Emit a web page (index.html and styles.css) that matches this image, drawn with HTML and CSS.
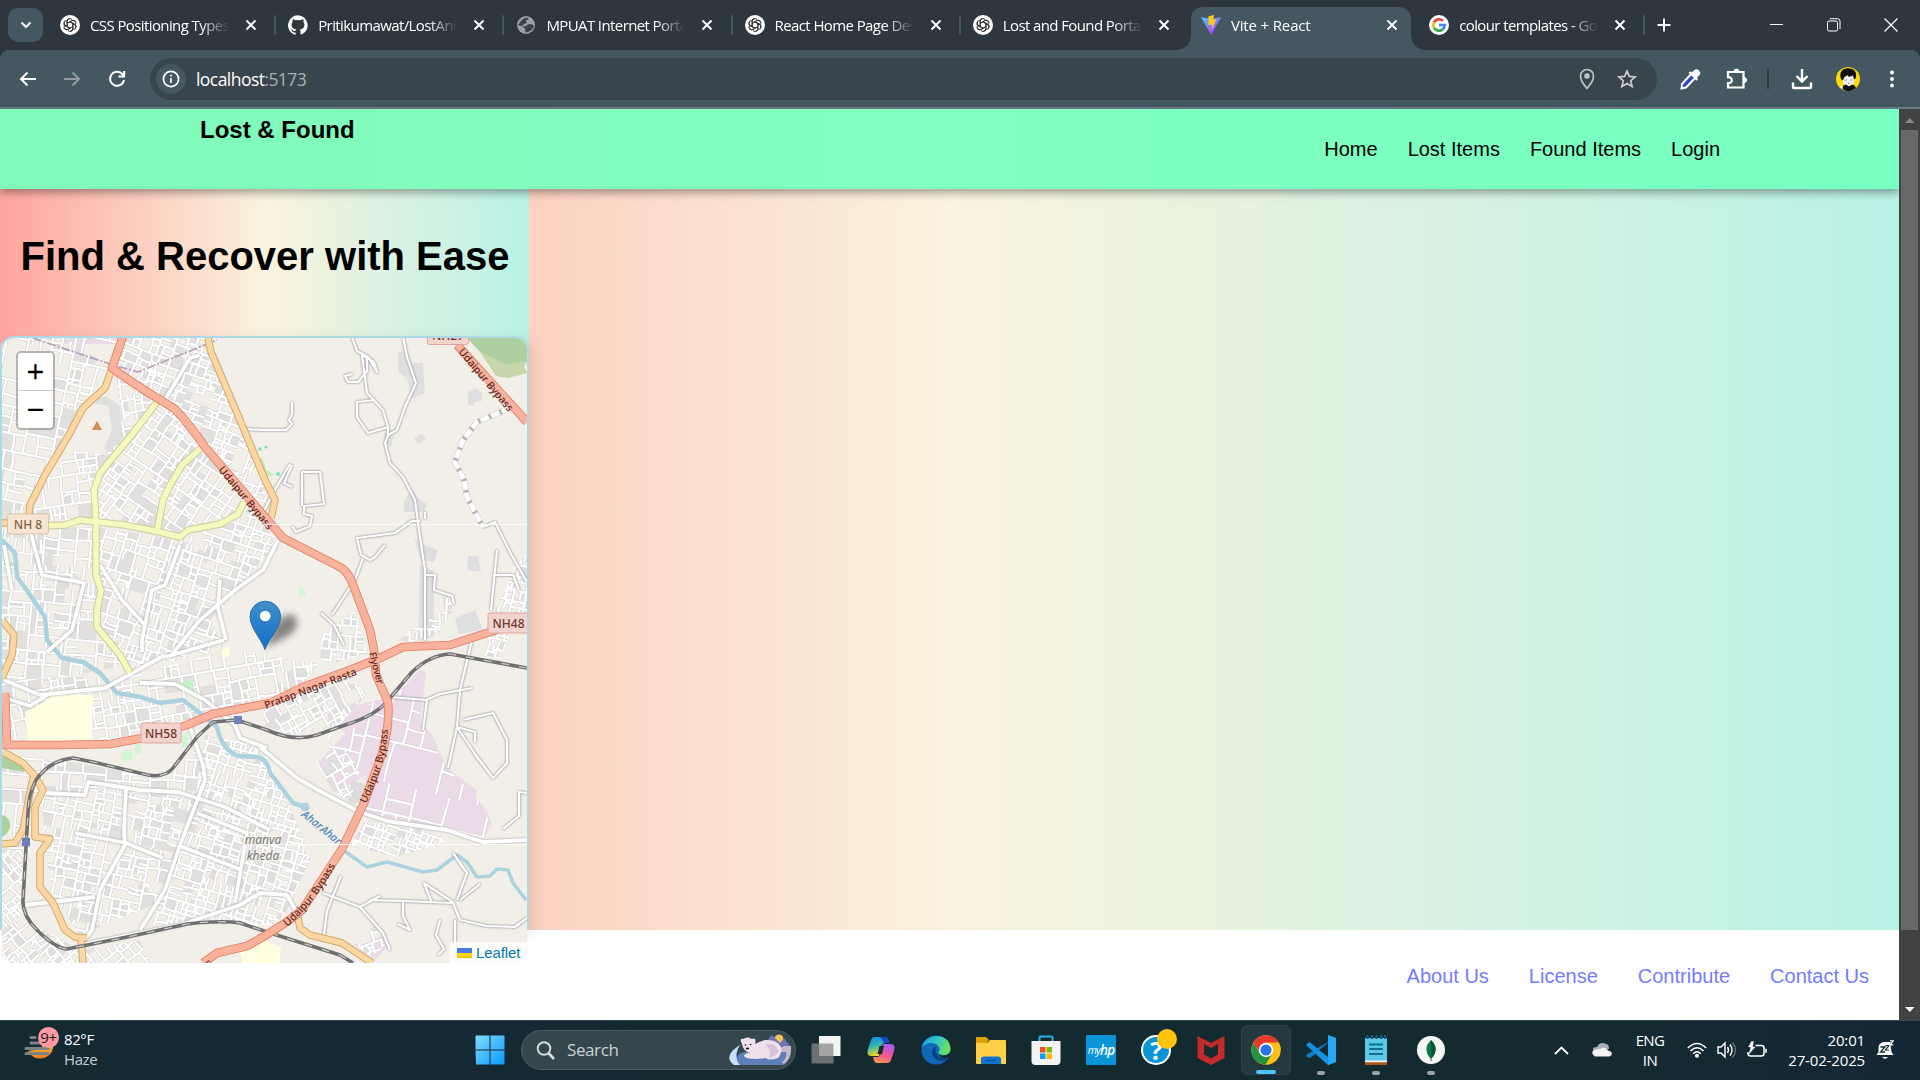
FILE: index.html
```html
<!DOCTYPE html>
<html lang="en">
<head>
<meta charset="utf-8">
<title>Vite + React</title>
<link rel="stylesheet" href="styles.css">
</head>
<body>
<svg class="defs" width="0" height="0" aria-hidden="true">
  <defs>
    <symbol id="close" viewBox="0 0 12 12"><path d="M1.5 1.5l9 9M10.5 1.5l-9 9" stroke="#fff" stroke-width="1.9"/></symbol>
    <symbol id="gpt" viewBox="0 0 20 20"><circle cx="10" cy="10" r="10" fill="#fff"/><g fill="none" stroke="#333" stroke-width="1"><path id="petal" d="M7.2 11.6V6.2a2.7 2.7 0 0 1 5-1.4M7.2 8.3l4.4-2.6a2.7 2.7 0 0 1 3.7 1"/><use href="#petal" transform="rotate(60 10 10)"/><use href="#petal" transform="rotate(120 10 10)"/><use href="#petal" transform="rotate(180 10 10)"/><use href="#petal" transform="rotate(240 10 10)"/><use href="#petal" transform="rotate(300 10 10)"/></g></symbol>
  </defs>
</svg>
<div class="browser">
  <div class="tabstrip">
    <button class="tabsearch"><svg width="12" height="8" viewBox="0 0 12 8"><path d="M1.5 1.5L6 6l4.500-4.500" fill="none" stroke="#fff" stroke-width="2"/></svg></button>
    <div class="tab"><svg class="fav"><use href="#gpt"/></svg><span class="title">CSS Positioning Types</span><svg class="x"><use href="#close"/></svg><i class="div"></i></div>
    <div class="tab"><svg class="fav" viewBox="0 0 16 16"><path fill="#fff" d="M8 .2a8 8 0 0 0-2.500 15.600c.4.070.55-.17.55-.38v-1.490c-2.230.48-2.700-1.070-2.700-1.070-.36-.93-.89-1.180-.89-1.180-.73-.5.05-.49.05-.49.8.060 1.230.83 1.230.83.72 1.220 1.870.87 2.330.66.070-.52.280-.87.500-1.070-1.770-.2-3.640-.89-3.640-3.950 0-.87.310-1.590.820-2.150-.08-.2-.36-1.020.080-2.120 0 0 .67-.21 2.200.82a7.600 7.600 0 0 1 4 0c1.530-1.040 2.200-.82 2.200-.82.440 1.100.160 1.920.080 2.120.510.560.820 1.270.820 2.150 0 3.070-1.870 3.750-3.650 3.950.290.250.540.730.540 1.480v2.200c0 .21.150.46.550.38A8 8 0 0 0 8 .2z"/></svg><span class="title">Pritikumawat/LostAndFound</span><svg class="x"><use href="#close"/></svg><i class="div"></i></div>
    <div class="tab"><svg class="fav" viewBox="0 0 20 20"><circle cx="10" cy="10" r="9" fill="#9aa0a6"/><path d="M5 6q2-3 6-3.500l2 1.500-3 1.500q-1 1 1 1.500-1 2-3 2l-2 2-4-1zM9.500 17.500l-.5-4-3-2 4-.5q3-3 6-1.500l2 1q-1 6-8.500 7z" fill="#39444a"/></svg><span class="title">MPUAT Internet Portal</span><svg class="x"><use href="#close"/></svg><i class="div"></i></div>
    <div class="tab"><svg class="fav"><use href="#gpt"/></svg><span class="title">React Home Page Design</span><svg class="x"><use href="#close"/></svg><i class="div"></i></div>
    <div class="tab"><svg class="fav"><use href="#gpt"/></svg><span class="title">Lost and Found Portal</span><svg class="x"><use href="#close"/></svg></div>
    <div class="tab active"><svg class="fav" viewBox="0 0 20 20"><defs><linearGradient id="vt" x1="0" y1="0" x2=".6" y2="1"><stop offset="0" stop-color="#41d1ff"/><stop offset="1" stop-color="#bd34fe"/></linearGradient></defs><path d="M0 2.300l10 1.500 10-1.500L10.300 20z" fill="url(#vt)"/><path d="M7.500 1.300l6-1.200-1.500 4.500 3.400-.4-5 11 .7-5.700-3.700.5z" fill="#ffc81f"/></svg><span class="title">Vite + React</span><svg class="x"><use href="#close"/></svg></div>
    <div class="tab"><svg class="fav" viewBox="0 0 20 20"><circle cx="10" cy="10" r="10" fill="#fff"/><g fill="none" stroke-width="2.700"><path d="M4.900 7.400A5.700 5.700 0 0 1 14 5.900" stroke="#ea4335"/><path d="M4.900 12.600a5.700 5.700 0 0 1 0-5.200" stroke="#fbbc05"/><path d="M13.800 14.200a5.700 5.700 0 0 1-8.900-1.600" stroke="#34a853"/><path d="M10 10h5.700a5.700 5.700 0 0 1-1.900 4.200" stroke="#4285f4"/></g></svg><span class="title">colour templates - Google</span><svg class="x"><use href="#close"/></svg><i class="div"></i></div>
    <svg class="newtab" width="14" height="14" viewBox="0 0 14 14"><path d="M7 .5v13M.5 7h13" stroke="#fff" stroke-width="2"/></svg>
    <div class="winctl">
      <svg width="14" height="14"><path d="M0 6.500h13" stroke="#fff"/></svg>
      <svg width="14" height="14" fill="none" stroke="#fff"><rect x=".5" y="3" width="10" height="10" rx="1.500"/><path d="M3 .7h7.500a2.500 2.500 0 0 1 2.500 2.500V11"/></svg>
      <svg width="14" height="14"><path d="M.5.5l13 13M13.500.5l-13 13" stroke="#fff" stroke-width="1.200"/></svg>
    </div>
  </div>
  <div class="toolbar">
    <svg class="ic" viewBox="0 0 24 24" fill="none" stroke="#fff" stroke-width="2"><path d="M20 12H5.500M11.500 5.500L5 12l6.500 6.500"/></svg>
    <svg class="ic fwd" viewBox="0 0 24 24" fill="none" stroke="#919a9f" stroke-width="2"><path d="M4 12h14.500M12.500 5.500L19 12l-6.500 6.500"/></svg>
    <svg class="ic reload" viewBox="0 0 24 24" fill="none" stroke="#fff" stroke-width="2"><path d="M19 13a7 7 0 1 1-2-6.200l2 2M19.200 4v5.500h-5.700"/></svg>
    <div class="omnibox">
      <span class="info"><svg width="18" height="18" viewBox="0 0 18 18"><circle cx="9" cy="9" r="7.600" fill="none" stroke="#fff" stroke-width="1.700"/><path d="M9 8v5M9 4.800v1.800" stroke="#fff" stroke-width="1.700"/></svg></span>
      <span class="url">localhost<em>:5173</em></span>
      <svg class="pin" width="20" height="22" viewBox="0 0 20 22" fill="none" stroke="#c0c5c8" stroke-width="1.700"><path d="M10 20.300C5 15 3.500 11 3.500 8a6.500 6.500 0 0 1 13 0c0 3-1.500 7-6.500 12.300z"/><circle cx="10" cy="8" r="1.900" fill="#c0c5c8"/></svg>
      <svg class="star" width="20" height="20" viewBox="0 0 20 20"><path d="M10 2l2.300 5.400 5.800.5-4.400 3.800 1.400 5.700-5.100-3-5.100 3 1.400-5.700L1.900 7.900l5.800-.5z" fill="none" stroke="#c9cdd0" stroke-width="1.700"/></svg>
    </div>
    <svg class="ic drop" viewBox="0 0 24 24"><path d="M3.500 21.500l.5-4.500L14 6l4 4L8 20.500z" fill="#2c47c4" stroke="#fff" stroke-width="2"/><path d="M10.500 5.500l2-1 1.500 1L17 2.500q2-1 4 1t1 4L19 10.500l1 1.500-1.500 1.800z" fill="#fff"/></svg>
    <svg class="ic puzzle" viewBox="0 0 24 24" fill="none" stroke="#fff" stroke-width="2.200"><path d="M3 5h15.500v15.500H3v-4.300c5 .5 5-6.500 0-6z"/><path d="M9 4.500a2.500 2.500 0 0 1 5 0zM19 10.500a2.500 2.500 0 0 1 0 5z" fill="#fff" stroke-width="1"/></svg>
    <i class="tsep"></i>
    <svg class="ic dl" viewBox="0 0 24 24" fill="none" stroke="#fff" stroke-width="2.400"><path d="M12 2v12M6.500 9l5.500 5.500L17.500 9M3 15.500V20q0 1 1 1h16q1 0 1-1v-4.500"/></svg>
    <svg class="ic ava" viewBox="0 0 24 24"><circle cx="12" cy="12" r="12" fill="#ffd800"/><path d="M6.500 9h12v5.500q-1 4.500-6 5-5-.5-6-5z" fill="#f2f2f2"/><path d="M5 12C2.500 5 7 .5 13 1.500c6-.5 8.500 5 6.500 10l-1.500 1-1-4-4 1.500L11.500 8 8 10.500l-1 3z" fill="#111"/><path d="M8.500 13H11M14 13h2.500M12 16.300h2" stroke="#777" stroke-width=".8"/><path d="M7.500 18.500l2.500-1 3 2 3-2 2.500 1 1.500 2.500q-7.500 6-14 .5z" fill="#111"/><path d="M5 18l2 3-1 1-2-2z" fill="#f2f2f2"/></svg>
    <svg class="ic menu" viewBox="0 0 24 24" fill="#fff"><circle cx="12" cy="5.500" r="1.900"/><circle cx="12" cy="12" r="1.900"/><circle cx="12" cy="18.500" r="1.900"/></svg>
  </div>

  <div class="viewport">
    <div class="page">
      <header class="navbar">
        <div class="brand">Lost &amp; Found</div>
        <nav><a>Home</a><a>Lost Items</a><a>Found Items</a><a>Login</a></nav>
      </header>
      <main class="hero">
        <section class="panel">
          <h1>Find &amp; Recover with Ease</h1>
          <div class="mapframe">
            <div class="map">
              <svg class="tiles" width="525" height="625" viewBox="2 338 525 625">
                <defs>
                  <path id="t1" d="M218 470L280 545"/><path id="t2" d="M458 352L520 426"/><path id="t3" d="M366 804C380 775 388 752 388 720"/><path id="t4" d="M287 927C310 907 324 888 341 855"/><path id="t5" d="M266 709L362 673"/><path id="t6" d="M369 653L381 700"/><path id="t7" d="M301 816Q322 832 350 856"/>
                  <linearGradient id="mk" x1="0" y1="0" x2="0" y2="1"><stop offset="0" stop-color="#3f8fca"/><stop offset="1" stop-color="#126fc6"/></linearGradient>
                  <filter id="soft" x="-50%" y="-50%" width="200%" height="200%"><feGaussianBlur stdDeviation="3.500"/></filter>
                </defs>
                <rect x="2" y="338" width="525" height="625" fill="#f2efe9"/>
                <g fill="#dfdfdf">
                  <path d="M398 352l10-1 4 12 11 0 2 30-13 6-5-20-9-8zM468 392l8-4 6 5 0 8-6 0-3 5-5-2zM414 439l7-5 6 4-8 6zM384 432l10 4-3 12-7-8zM404 502l8-14 6 10 9 6-3 8-20 0zM414 538l8 6 16 6-4 12-13-2zM468 556l10 0 3 16-14-2zM420 565l14 6 0 65-16 6zM455 618l20-8 8 20-25 4zM80 408l12-8 14-4 14 10 4 30-14 22-6-10 8-18-4-24-20-4-10 12z"/>
                </g>
                <path d="M60 338h80v6H62z" fill="#ebdbe8"/>
                <path d="M467 338h60v24l-20 3-24-10z" fill="#add19e"/><path d="M480 352l27 13 20-4-3 6 4 6-20 5-12-2z" fill="#c8d7ab"/>
                <path d="M420 670L426 672 420 722 432 735 447 768 477 790 476 800 483 805 492 823 485 838 363 813 366 775 340 790 318 763 346 733 328 722 328 713 377 700 393 698zM357 947L383 935 387 947 372 963z" fill="#ebdbe8"/>
                <path d="M352 780l15 5-6 22-13-6z" fill="#dcdcdc"/>
                <g id="streets"></g>
                <g fill="#fffee0"><path d="M25 712L48 700 50 695H93L92 740 28 742z"/><path d="M240 952L262 937 281 948 279 963H243zM48 641h12l-3 8zM222 650l8-4-1 10-6 2z"/></g>
                <path d="M180 683l12-3 3 14z" fill="#c4f3c8"/><path d="M2 756l26 8-4 8-22-4zM2 815q9 2 8 12-1 6-8 10z" fill="#add19e"/><g fill="#d2f5d4"><circle cx="127" cy="756" r="6"/><path d="M182 735l6-2v14l-6 0zM135 745l5-2 1 10-6 1zM298 588l6-2 2 10-7 0z"/></g>
                <path d="M97 421l5 9H92z" fill="#d08f55"/>
                <path d="M262 456l4 14 8 4-6 3-10-14z" fill="#c8e8b8"/><g fill="#7fe0c0"><circle cx="260" cy="449" r="1.800"/><circle cx="266" cy="447" r="1.600"/><circle cx="278" cy="474" r="2"/></g>
                <g class="river"><path d="M2 540L15 553 17 577 28 592 45 617 47 640 62 658 83 662 100 673 117 693 140 697 160 703 183 700 200 713 217 727Q222 750 238 756L258 757Q268 760 270 773L293 803 305 807"/><path d="M343 850L367 867 387 862 423 872 437 870 457 855 467 862 477 877 490 876 497 869 508 870 513 883 526 900" stroke-width="3.500"/></g>
                <circle cx="305" cy="807" r="4.500" fill="#aad3df"/>
                <g class="lane">
                  <path d="M403 337L407 357 416 383 405 407 397 430 388 435 385 443 390 463 403 477 415 500 420 537 425 570V640M352 337L357 351 368 357 377 372 374 362 362 355 367 393 383 410 388 427 388 435M375 400L357 402 357 417 368 433 388 427M367 357v14l-9 11-10 0-3-6 8-2M420 521L412 521 395 533 357 538 361 555 370 560 375 557 385 545M425 519V512M363 558L355 580 332 615M292 402l0 12-3 6 3 4-6 6-24 0-18-1M302 472h18l4 32-20 2v8l8 2-2 10-14 6-4-6M302 472v34M292 465l-8 18 8 4M260 518l16-30 14-24M321 613l13 12 10 20M483 527l12-5 16 32 16 28M497 550l-6 60M425 575h10l-1 15 18 6 2 8M493 575h20l6 15"/>
                  <path d="M472 640L460 690 457 727 448 768M457 727L477 757 493 778 507 763 507 740 493 713 463 720M390 697l36 3 14-6 32-6M427 700l-4 30M457 727l18 5 0 10M527 793l-8-1 0 24-16 13M453 853L467 873 457 900M370 900L403 901 453 903 460 920 487 926 515 927 527 918M323 893L360 907 383 933 390 950M360 907l20-11M403 901v15l7 14-12-6M460 900l20-16M454 903l-30-20 8 20M440 920l-4 15 8 14-6 6M455 920v40M341 876l-14 35-3 24"/>
                </g>
                <g class="road">
                  <path d="M260 747L297 778 327 795 360 812 387 821 447 830 483 842 527 840M200 355L190 358 165 400M100 565L122 600 145 625M30 530L42 575 84 583 72 630 47 652M278 540L263 570 235 590 200 620 170 657M165 657L224 640M180 545L165 585 152 590 142 640 142 652M4 680L40 695 105 688 165 655M4 545L12 590M140 683L175 684 205 700 235 725 240 738 267 748M190 727L203 765 205 780 180 845 165 890 140 930M45 793L85 795 88 782 140 790 178 792 225 807 270 830M75 833L126 843 163 858M126 790L124 830 125 845 100 890 92 930 80 945 130 935 180 925 240 905 260 893 287 895 297 913M25 905L95 897M220 580L218 608 226 640M2 697L30 706 52 692M197 813l50 20-12 70M180 846l62 24"/>
                </g>
                <g class="boundary"><path d="M33 338L77 353 113 365 138 372 217 340"/></g>
                <g class="yellow-case"><path id="yl" d="M157 402L130 437 100 473 94 490 96 522 96 575 101 590 97 610 97 627 120 655 130 673M40 526L65 525 80 520 125 525 160 532 180 537 188 530 220 524 238 514 244 502M201 448L182 465 170 485 163 500 157 532"/></g>
                <use href="#yl" class="yellow"/>
                <g class="orange-case"><path id="or" d="M112 368L105 388 83 408 70 433 45 475 30 505 28 523M208 338L211 352 240 420 265 480 275 500 271 518M2 523H10M2 620L14 635 12 655 2 678M3 752L23 763 34 775 29 797 23 830 15 843 2 844M36 778L43 790 35 807 35 837 50 839 40 853 40 887 53 903 65 930 75 937 87 938M81 938L83 963M297 913L300 928 310 935 342 943 372 963"/></g>
                <use href="#or" class="orange"/>
                <g class="rail"><path id="rl" d="M527 668L450 654Q430 655 412 672L390 698Q378 715 345 725L317 735Q293 742 267 730L237 720 213 722 197 737 173 768Q165 778 148 775L93 762 73 758Q50 760 36 780 28 795 28 813L23 900Q22 915 37 930 55 948 67 949L127 937 187 924Q222 920 240 923L267 932 340 955 353 963"/></g>
                <use href="#rl" class="railgap"/>
                <g fill="#7180bd"><rect x="234" y="716" width="8" height="8"/><rect x="22" y="838" width="8" height="8"/></g>
                <path class="track-case" d="M510 408L477 422 463 440 455 462 464 480 467 497 483 527"/><path class="track" d="M510 408L477 422 463 440 455 462 464 480 467 497 483 527"/>
                <g class="trunk-case"><path id="tr" d="M123 336L112 368Q135 385 175 409 190 425 205 447L270 523 283 538 338 566Q347 570 352 582L370 630 374 650 376 675 388 702Q390 725 382 754L364 803 342 849 302 910Q285 925 247 946L217 953 203 963M457 345L527 422M2 745H60L110 744 143 738 187 725 213 714 270 703 303 687 350 670 380 658 403 647 450 645 490 632 527 620M5 693L7 743"/></g>
                <use href="#tr" class="trunk"/>
                <g class="shield">
                  <rect x="7.500" y="514" width="41" height="20" rx="2" fill="#f6e5d2" stroke="#dcc3a4"/><text x="28" y="529" fill="#7d6543">NH 8</text>
                  <rect x="141" y="723" width="40" height="20" rx="2" fill="#f3d3cd" stroke="#dfa79f"/><text x="161" y="738">NH58</text>
                  <rect x="488" y="613" width="44" height="20" rx="2" fill="#f3d3cd" stroke="#dfa79f"/><text x="508.500" y="628">NH48</text>
                  <rect x="427.500" y="324" width="41" height="20.500" rx="2" fill="#f3d3cd" stroke="#dfa79f"/><text x="448" y="340">NH27</text>
                </g>
                <g class="way"><text><textPath href="#t1">Udaipur Bypass</textPath></text><text><textPath href="#t2">Udaipur Bypass</textPath></text><text><textPath href="#t3">Udaipur Bypass</textPath></text><text><textPath href="#t4">Udaipur Bypass</textPath></text><text><textPath href="#t5">Pratap Nagar Rasta</textPath></text><text class="fly"><textPath href="#t6">Flyover</textPath></text><text class="water"><textPath href="#t7">AharAhar</textPath></text><text x="204" y="970" transform="rotate(-32 204 970)">ss</text></g>
                <g class="place"><text x="263" y="844">manva</text><text x="263" y="859.500">kheda</text></g>
                <path d="M260 524.500H527M260 844.500H527" stroke="#fff" opacity=".8"/>
                <path d="M265 648L276 622q14-12 20-4 4 10-8 18z" fill="#000" opacity=".45" filter="url(#soft)"/>
                <path d="M265 649.500C262 640 250 628 250 616.500a15.300 15.300 0 0 1 30.600 0C280.600 628 268 640 265 649.500z" fill="url(#mk)" stroke="#2c6fa8"/><circle cx="265.200" cy="616" r="5.300" fill="#fff"/>
              </svg>
              <div class="zoomctl"><a>+</a><a>−</a></div>
              <div class="attribution"><svg width="15" height="10"><path fill="#4c7be1" d="M0 0h15v5H0z"/><path fill="#ffd500" d="M0 5h15v4H0z"/><path fill="#e0bc00" d="M0 9h15v1H0z"/></svg><a>Leaflet</a></div>
            </div>
          </div>
        </section>
      </main>
      <footer><a>About Us</a><a>License</a><a>Contribute</a><a>Contact Us</a></footer>
    </div>
    <div class="scrollbar"><svg width="21" height="21"><path d="M6 14h9.500L10.800 9z" fill="#868686"/></svg><div class="thumb"></div><svg width="21" height="21"><path d="M6 8h9.500l-4.700 5z" fill="#fff"/></svg></div>
  </div>

  <div class="taskbar">
    <div class="weather">
      <div class="wicon"><svg width="34" height="36" viewBox="0 0 34 36"><defs><linearGradient id="sun" x1="0" y1="0" x2="0" y2="1"><stop offset="0" stop-color="#fdbb2c"/><stop offset="1" stop-color="#f27a1a"/></linearGradient></defs><path d="M4 22a13 12 0 0 0 25-3V15H18v5z" fill="url(#sun)"/><path d="M7 8.500h4M7 14h10M2 19.500h22M2 24.500h22" stroke="#7c8489" stroke-width="3" stroke-linecap="round"/></svg><b class="badge">9+</b></div>
      <div class="wtext"><span>82°F</span><span class="dim">Haze</span></div>
    </div>
    <svg class="start" width="30" height="30" viewBox="0 0 30 30"><defs><linearGradient id="wn" x1="0" y1="0" x2="1" y2="1"><stop offset="0" stop-color="#80dcff"/><stop offset="1" stop-color="#0a98fb"/></linearGradient></defs><path d="M1 .5h13.500v14H.5V1zM15.500.5H29l.5.5v13.500h-14zM.5 15.500h14v14H1zM15.500 15.500h14V29l-.5.5H15.500z" fill="url(#wn)"/></svg>
    <div class="search">
      <svg width="19" height="19" viewBox="0 0 19 19" fill="none" stroke="#d5dadc" stroke-width="2"><circle cx="8" cy="7.500" r="6.300"/><path d="M12.500 12l5.500 6" stroke-width="2.600"/></svg>
      <span>Search</span>
      <svg class="bear" width="64" height="32" viewBox="0 0 64 32"><circle cx="51" cy="5" r="4.500" fill="#f5c25c"/><path d="M32 14L44 1l8 8 4-5 7 9q1 12-7 18H30z" fill="#6d74b4"/><path d="M56 12h7q1 12-7 18l-14-10z" fill="#c7b7cf"/><path d="M6 31Q-6 22 12 11 4 24 14 31z" fill="#c4e2fb"/><path d="M12 31Q4 22 16 18h42q2 8-8 13z" fill="#5e7fb9"/><path d="M14 10q-3-6 1-5 5-3 9 0 5-2 3 5 4-2 10-4 12-1 16 7 1 7-3 11-10 3-12 0l-10 1q-13 0-12-4 2-2 6-2-7-2-8-9z" fill="#eee1ec"/><path d="M37 10q10-2 14 7-4 7-10 6 4-5-4-13z" fill="#d9c3dc"/><circle cx="17.500" cy="11" r=".8"/><circle cx="22.500" cy="10.500" r=".8"/><ellipse cx="19.500" cy="14.500" rx="1.600" ry="1.100"/></svg>
    </div>
    <div class="apps">
      <span class="app"><svg viewBox="0 0 30 30"><path d="M8 1h21.500v20H8z" fill="#f4f4f4"/><path d="M.5 8.500h22v20H.5z" fill="#8a8a8a" opacity=".75"/></svg></span>
      <span class="app"><svg viewBox="0 0 30 30"><defs><linearGradient id="c1" x1="0" y1="0" x2=".3" y2="1"><stop offset="0" stop-color="#1c7ff0"/><stop offset=".5" stop-color="#28b8b0"/><stop offset="1" stop-color="#f2d426"/></linearGradient><linearGradient id="c2" x1=".7" y1="0" x2=".3" y2="1"><stop offset="0" stop-color="#a659f5"/><stop offset=".55" stop-color="#f0568d"/><stop offset="1" stop-color="#ff9650"/></linearGradient></defs><path d="M8 2h11q3 0 4 6h-4q-3 0-4 4l-2 9H5q-5 0-3-7l3-9q1-3 3-3z" fill="url(#c1)"/><path d="M22 28H11q-3 0-4-6h4q3 0 4-4l2-9h8q5 0 3 7l-3 9q-1 3-3 3z" fill="url(#c2)"/><path d="M14 2h6q2 1 3 6h-5q-2-4-4-6z" fill="#1749c0"/><path d="M13.500 11h4.500l-2 8h-4.500z" fill="#142a31"/></svg></span>
      <span class="app"><svg viewBox="0 0 30 30"><defs><linearGradient id="e1" x1="0" y1="0" x2="1" y2=".2"><stop offset="0" stop-color="#1aa0e8"/><stop offset=".6" stop-color="#36c7c0"/><stop offset="1" stop-color="#6be256"/></linearGradient></defs><circle cx="15" cy="15" r="14.500" fill="#1268b8"/><path d="M.6 13C3-2 28-4 29.500 13c.5 7-7 8-11 6-3-1 1-3 0-6-3-7-14-6-17.900 0z" fill="url(#e1)"/><path d="M13 12.500C8 18 13 28 24 25.500L28 22q-10 3-13-4-1-4 0-6z" fill="#0b4383"/><path d="M17 18.500q2 4.500 7 4.500 4 0 6-2.500v-4q-3 4-8 4-4 0-5-2z" fill="#142a31"/></svg></span>
      <span class="app"><svg viewBox="0 0 30 30"><path d="M0 3q0-1 1-1h9l3 3-3 4H0z" fill="#e0a008"/><path d="M0 8h11l3-3h15q1 0 1 1v23H1q-1 0-1-1z" fill="#ffcf45"/><path d="M5 29v-5q0-2.500 3-2.500h14q3 0 3 2.500v5z" fill="#0f76d2"/><path d="M10 25.500h10" stroke="#0a519a" stroke-width="1.400"/></svg></span>
      <span class="app"><svg viewBox="0 0 30 30"><path d="M8.500 7V2.500q0-1 1-1h11q1 0 1 1V7" fill="none" stroke="#29b0ea" stroke-width="2"/><path d="M.5 6h29v20q0 4-4 4h-21q-4 0-4-4z" fill="#f3f3f3"/><path fill="#f25022" d="M9 12h5.500v5.500H9z"/><path fill="#7fba00" d="M15.500 12H21v5.500h-5.500z"/><path fill="#00a4ef" d="M9 18.500h5.500V24H9z"/><path fill="#ffb900" d="M15.500 18.500H21V24h-5.500z"/></svg></span>
      <span class="app hp">my<b>hp</b></span>
      <span class="app help">?<i></i></span>
      <span class="app"><svg viewBox="0 0 30 30"><path d="M1.500 1l13.500 7L28.500 1v22L15 30 1.500 23zM8 9v10.500l7 4 7-4V9l-7 4z" fill="#c22a2c" fill-rule="evenodd"/></svg></span>
      <span class="app on"><svg viewBox="0 0 30 30"><circle cx="15" cy="15" r="14.700" fill="#fbc116"/><path d="M2.200 7.700A14.700 14.700 0 0 1 27.800 7.700H15L9 18z" fill="#e33b2e"/><path d="M2.200 7.700A14.700 14.700 0 0 0 14.500 29.700L21 18.700H9z" fill="#229342"/><path d="M15 7.700h12.800q2 3.500 1.900 7.300l-10 0z" fill="#fbc116"/><circle cx="15" cy="15" r="7.200" fill="#fff"/><circle cx="15" cy="15" r="5.600" fill="#2a74ea"/></svg></span>
      <span class="app run"><svg viewBox="0 0 30 30"><path d="M22 0l8 3v24l-8 3-12-11.500L3.500 23 .5 21.500v-2L22 7z" fill="#0a7dc8"/><path d="M.5 9l3-2L22 21.500V30L.5 10.500z" fill="#1490df"/><path d="M22 8v14l-9-7z" fill="#142a31"/><path d="M22 0l8 3v24l-8 3z" fill="#2aa7f2"/></svg></span>
      <span class="app run"><svg viewBox="0 0 30 30"><path d="M4 3h22v24H4z" fill="#5cc8e6"/><path d="M4 26.500h22V30H4z" fill="#a5541c"/><path d="M4 25.500h22v1.800H4z" fill="#f5f5f5"/><path d="M8 9.500h14M8 14h14M8 19h14" stroke="#0c6f92" stroke-width="1.800"/><path d="M6.500 0v4M11 0v4M15.500 0v4M20 0v4M24 0v4" stroke="#0d607e" stroke-width="2.200"/></svg></span>
      <span class="app run"><svg viewBox="0 0 30 30"><circle cx="15" cy="15" r="14" fill="#f6f6f6"/><path d="M15 5q9 9 .5 18.500V26h-1v-2.500Q6 14 15 5z" fill="#10774a"/><path d="M15 5q9 9 .5 18.500z" fill="#0a5636"/></svg></span>
    </div>
    <div class="tray">
      <svg class="chev" width="15" height="9" viewBox="0 0 15 9"><path d="M1 8l6.500-6.500L14 8" fill="none" stroke="#fff" stroke-width="1.800"/></svg>
      <svg class="cloud" width="20" height="14" viewBox="0 0 20 14"><path d="M2 9Q-1 4 5 4q3-6 9-3 3 0 3 5z" fill="#a9b0b3"/><path d="M3 13.500Q-2 10 2 7l7-1.500 3-1q3 1 4 3 5 1 3.500 4.500Q18 13.500 16 13.500z" fill="#f4f4f4"/></svg>
      <div class="lang"><span>ENG</span><span>IN</span></div>
      <svg class="wifi" width="20" height="16" viewBox="0 0 20 16" fill="none" stroke="#fff" stroke-width="1.500"><path d="M.8 6Q10-3 19.200 6M3.500 9q6.500-6.500 13 0M6.200 11.700q3.800-3.800 7.600 0"/><circle cx="10" cy="13.800" r="1.300" fill="#fff"/></svg>
      <svg class="vol" width="21" height="18" viewBox="0 0 21 18" fill="none" stroke="#fff" stroke-width="1.400"><path d="M1 6h3l4-4v14l-4-4H1zM10.500 6q2 3 0 6M13 3.500q4 5.500 0 11"/><path d="M15.500 1.500q6 7.500 0 15" opacity=".35"/></svg>
      <svg class="bat" width="21" height="18" viewBox="0 0 21 18" fill="none" stroke="#fff" stroke-width="1.500"><path d="M8.500 4.500h6q2.500 0 2.500 2.500v5.500q0 2.500-2.500 2.500h-11Q1 15 1 12.500V11M19 7.700v4"/><path d="M4.500.5L1.500 6H4l-2 7 6-7H5.500L6.500.5z" fill="#fff" stroke-width=".4"/></svg>
      <div class="clock"><span>20:01</span><span>27-02-2025</span></div>
      <div class="bell"><svg width="18" height="20" viewBox="0 0 18 20"><path d="M.5 15l2-3V8q0-5 5-6h7q0 4 1 10l2 3zM6 17h6q-3 3.500-6 0z" fill="#fff"/><path d="M4.500 7H9l-4.500 5H9" fill="none" stroke="#142a31" stroke-width="1.300"/><path d="M9.500 5.500H13L9.500 10H13" fill="none" stroke="#142a31" stroke-width="1.200"/><path d="M14 0.800h3.300L14 4.800h3.300" fill="none" stroke="#fff" stroke-width="1.200"/></svg></div>
    </div>
  </div>
</div>
<script src="streets.js"></script>
</body>
</html>
```
FILE: styles.css
```css
* { box-sizing: border-box; }
body { margin: 0; font-family: "Liberation Sans", Arial, sans-serif; overflow: hidden; }
.defs { display: none; }
svg { display: block; flex: none; }
.browser { width: 1920px; height: 1080px; display: flex; flex-direction: column; }

.tabstrip { height: 50px; background: #2d373d; display: flex; align-items: center; font: 15px "Open Sans", "Noto Sans", sans-serif; color: #fff; }
.tabsearch { width: 35px; height: 34px; margin: 0 7px 0 8px; border: 0; border-radius: 10px; background: #455761; display: flex; align-items: center; justify-content: center; }
.tab { width: 228.2px; flex: none; height: 50px; display: flex; align-items: center; padding: 0 2px 0 10px; }
.fav { width: 20px; height: 20px; margin-right: 10px; }
.title { width: 141px; white-space: nowrap; overflow: hidden; letter-spacing: -0.6px; line-height: 24px; mask-image: linear-gradient(to right, #000 110px, transparent 139px); }
.x { width: 12px; height: 12px; margin-left: 14px; }
.div { width: 2px; height: 20px; margin-left: auto; background: #455761; border-radius: 1px; }
.active { width: 220.2px; margin-right: 8px; height: 43px; align-self: flex-end; padding-bottom: 7px; background: #455761; border-radius: 12px 12px 0 0; position: relative; }
.active .title { letter-spacing: -0.15px; }
.active::before, .active::after { content: ""; position: absolute; bottom: 0; width: 14px; height: 14px; }
.active::before { left: -14px; background: radial-gradient(circle at 0 0, transparent 13.5px, #455761 14px); }
.active::after { right: -14px; background: radial-gradient(circle at 100% 0, transparent 13.5px, #455761 14px); }
.newtab { margin-left: 10px; }
.winctl { display: flex; gap: 43px; margin-left: auto; padding-right: 22px; }

.toolbar { height: 59px; border-bottom: 2px solid #6d7d86; display: flex; align-items: center; padding: 0 16px; background: radial-gradient(circle at 10px 10px, #455761 10px, #2d373d 10.5px) 0 0 / 10px 10px no-repeat, radial-gradient(circle at 0 10px, #455761 10px, #2d373d 10.5px) 100% 0 / 10px 10px no-repeat, linear-gradient(#455761, #455761) 50% 0 / calc(100% - 20px) 10px no-repeat, linear-gradient(#455761, #455761) 0 10px / 100% 60px no-repeat; }
.ic { width: 24px; height: 24px; }
.fwd { margin-left: 20px; }
.reload { margin: 0 21px; }
.omnibox { flex: 1; height: 42px; border-radius: 21px; background: #39454c; display: flex; align-items: center; padding: 0 20px 0 6px; }
.info { width: 30px; height: 30px; border-radius: 50%; background: #455761; display: flex; align-items: center; justify-content: center; }
.url { margin-left: 10px; font: 17.5px "Open Sans", "Noto Sans", sans-serif; letter-spacing: -0.55px; color: #fff; flex: 1; }
.url em { font-style: normal; color: #a9b0b4; }
.star { margin-left: 20px; }
.drop { margin-left: 21px; }
.puzzle { margin: 0 18px 0 23px; }
.tsep { width: 2px; height: 20px; background: #2f3a40; }
.dl { margin: 0 22px 0 21px; }
.menu { margin-left: 20px; }

.viewport { height: 911px; display: flex; }
.page { width: 1899px; height: 911px; display: flex; flex-direction: column; background: #fff; }
.navbar { height: 80px; flex: none; padding: 0 179px 0 200px; display: flex; justify-content: space-between; align-items: center; background: linear-gradient(to right, #80f9b9, #80ffc1 45%, #78ffc2); box-shadow: 0 4px 8px rgba(0, 0, 0, .34); position: relative; z-index: 1; }
.brand { align-self: flex-start; padding-top: 7px; font-size: 24px; line-height: 27px; font-weight: bold; }
.navbar nav { display: flex; gap: 30px; font-size: 20px; }
.hero { height: 741px; flex: none; background: linear-gradient(to right, #ffa69e, #faf3dd, #b8f2e6); }
.panel { width: 529px; height: 741px; background: linear-gradient(to right, #ffa69e, #faf3dd, #b8f2e6); }
.panel h1 { margin: 0; height: 147px; padding: 43px 0 0 20.5px; font-size: 40px; line-height: 48px; white-space: nowrap; }
.mapframe { height: 594px; border: 2px solid lightblue; border-bottom: 0; border-radius: 14px 14px 0 0; box-shadow: 4px 4px 14px rgba(0, 0, 0, .1); }
.map { position: relative; width: 525px; height: 625px; border-radius: 12px; overflow: hidden; }
.tiles { font-family: "Noto Sans", sans-serif; stroke-linejoin: round; }
.river { fill: none; stroke: #aad3df; stroke-width: 4.5; }
.lane { fill: none; stroke: #fff; stroke-width: 2.2; filter: drop-shadow(0 0 .8px #999) drop-shadow(0 0 .5px #bbb); }
.road { fill: none; stroke: #fff; stroke-width: 3.8; filter: drop-shadow(0 0 .8px #999); }
.boundary { fill: none; stroke: #b9a0ba; stroke-width: 1.8; stroke-dasharray: 9 2 2 2; }
.yellow-case { fill: none; stroke: #c9cc9b; stroke-width: 7.5; }
.yellow { fill: none; stroke: #f5f9bd; stroke-width: 5.6; }
.orange-case { fill: none; stroke: #cdaa62; stroke-width: 7.5; }
.orange { fill: none; stroke: #fcd6a4; stroke-width: 5.6; }
.trunk-case { fill: none; stroke: #e07a62; stroke-width: 8.6; }
.trunk { fill: none; stroke: #f9b29c; stroke-width: 7; }
.rail { fill: none; stroke: #707070; stroke-width: 3.6; }
.railgap { fill: none; stroke: #ccc; stroke-width: 1.2; stroke-dasharray: 8 10; }
/* The casing stays white in the middle while the gaps show a grey tie. */
.track-case { fill: none; stroke: #b5b5b5; stroke-width: 5.5; }
.track { fill: none; stroke: #fff; stroke-width: 5; stroke-dasharray: 9 2.5; }
.shield { font-size: 12px; font-weight: 500; text-anchor: middle; fill: #70392f; }
.way { font-size: 10.4px; font-weight: 500; fill: #5c281c; letter-spacing: .05px; }
.fly { font-size: 9.8px; letter-spacing: -.2px; }
.water { fill: #4a86c0; font-style: italic; font-size: 11px; }
.place { font-size: 12px; font-style: italic; text-anchor: middle; fill: #777; stroke: #f2efe9; stroke-width: 2px; paint-order: stroke; }
.zoomctl { position: absolute; left: 14px; top: 13px; width: 39px; border: 2px solid rgba(0, 0, 0, .25); border-radius: 5px; background-clip: padding-box; display: flex; flex-direction: column; }
.zoomctl a { height: 37px; background: #fff; border-radius: 0 0 3px 3px; text-align: center; font: 23px/36px "DejaVu Sans", sans-serif; -webkit-text-stroke: .4px #000; }
.zoomctl a:first-child { height: 38px; border-bottom: 1px solid #ccc; border-radius: 3px 3px 0 0; }
.attribution { position: absolute; right: 0; bottom: 0; width: 77px; height: 21px; background: rgba(255, 255, 255, .85); display: flex; align-items: center; gap: 4px; padding-left: 7px; font-size: 15px; letter-spacing: -.1px; color: #0078a8; }
footer { flex: 1; display: flex; gap: 40px; justify-content: flex-end; padding: 35px 30px 0 0; font-size: 20px; color: #747bff; }
.scrollbar { width: 21px; background: #424242; display: flex; flex-direction: column; align-items: center; justify-content: space-between; position: relative; z-index: 2; }
.thumb { width: 17px; height: 800px; margin-bottom: auto; background: #686868; }

.taskbar { height: 60px; border-top: 1px solid #33474d; background: linear-gradient(to right, #142a31, #152934 22%, #132a30 40%, #142a31 85%, #152735); display: flex; align-items: center; padding-bottom: 1px; color: #fff; font: 15px/20px "Open Sans", "Noto Sans", sans-serif; letter-spacing: -.4px; }
.weather { width: 475px; height: 58px; display: flex; padding: 8px 0 0 24px; gap: 6px; }
.wicon { position: relative; width: 34px; }
.badge { position: absolute; left: 14px; top: -2px; width: 21px; height: 21px; border-radius: 50%; background: #ff99a4; color: #1a1a1a; font-weight: 400; text-align: center; }
.wtext { display: flex; flex-direction: column; }
.dim { color: #c9ced0; }
.search { width: 275px; height: 40px; margin-left: 16px; border-radius: 20px; background: #35474d; border: 1px solid #4c5c62; display: flex; align-items: center; padding: 0 3px 0 14px; font-size: 17px; color: #ced3d5; }
.search span { margin-left: 12px; flex: 1; }
.apps { display: flex; gap: 5px; margin-left: 5px; }
.app { width: 50px; height: 50px; border-radius: 6px; display: flex; align-items: center; justify-content: center; position: relative; }
.app svg { width: 30px; height: 30px; }
.on { background: #24383f; border: 1px solid #2c4047; }
.on::after, .run::after { content: ""; position: absolute; bottom: 0; left: 50%; width: 8px; height: 4px; margin-left: -4px; border-radius: 2px; background: #9aa3a7; }
.on::after { width: 20px; margin-left: -10px; background: #4cc2ff; }
.hp { width: 30px; height: 30px; margin: 10px; border-radius: 1px; background: #0a96d6; font: italic 10.5px "Open Sans", sans-serif; letter-spacing: -.8px; }
.hp b { font-size: 13.5px; font-weight: 600; }
.help { width: 30px; height: 30px; margin: 10px; border-radius: 50%; border: 2px solid #fff; background: #0a96d6; font: bold 25px "Open Sans", sans-serif; }
.help i { position: absolute; left: 14px; top: -8px; width: 20px; height: 20px; border-radius: 50%; background: #ffc20e; }
.tray { display: flex; align-items: center; margin-left: auto; padding-right: 26px; }
.cloud { margin-left: 23px; }
.lang { width: 36px; margin-left: 20px; display: flex; flex-direction: column; text-align: center; letter-spacing: -.6px; }
.wifi { margin-left: 19px; }
.vol { margin-left: 10px; }
.bat { margin-left: 9px; }
.clock { width: 80px; margin: 0 11px 0 17px; display: flex; flex-direction: column; text-align: right; letter-spacing: -.15px; }
```
FILE: streets.js
```js
// Fills each town district with an irregular network of residential streets.
const NS = 'http://www.w3.org/2000/svg';
const layer = document.getElementById('streets');
let seed = 7;
const rnd = () => (seed = (seed * 16807) % 2147483647) / 2147483647;

const districts = [
  [[[2,338],[118,338],[110,368],[80,410],[45,470],[28,520],[2,520]], 12, 12],
  [[[114,372],[160,402],[97,475],[95,520],[30,520],[48,475],[75,450],[105,455],[122,440],[120,400]], -8, 10],
  [[[125,338],[206,338],[230,400],[262,480],[270,515],[205,440],[178,408],[116,368]], 20, 8],
  [[[160,405],[178,412],[262,520],[240,510],[215,524],[180,535],[98,522],[98,480]], 35, 9.500],
  [[[2,530],[95,527],[97,620],[125,665],[2,690]], 5, 10],
  [[[98,527],[180,540],[250,515],[278,540],[240,590],[210,620],[225,650],[130,670],[100,625]], 18, 9],
  [[[2,680],[130,675],[230,650],[320,663],[300,688],[190,722],[100,742],[2,742]], -10, 11],
  [[[2,755],[60,760],[160,778],[200,748],[200,800],[45,795],[30,850],[2,850]], 4, 14],
  [[[40,785],[200,800],[165,900],[80,935],[50,890]], 12, 9],
  [[[205,735],[262,745],[300,830],[310,860],[280,925],[150,925],[195,800]], 17, 7],
  [[[2,850],[25,850],[25,920],[80,950],[140,940],[150,963],[2,963]], -40, 7.5],
  [[[322,635],[355,610],[368,655],[320,665]], 5, 8],
  [[[505,590],[515,565],[527,555],[527,615],[494,612]], 15, 7],
  [[[488,634],[510,634],[500,660],[485,656]], 15, 6],
  [[[365,822],[400,824],[440,835],[445,843],[395,857],[350,845]], 20, 7],
  [[[265,703],[340,680],[370,690],[340,725],[290,735],[262,725]], -30, 8],
  [[[422,620],[445,612],[442,595],[452,600],[452,612],[440,632],[410,642],[400,640]], 2, 8],
  [[[420,670],[420,722],[447,768],[480,800],[490,823],[485,838],[363,813],[330,765],[328,713],[393,698]], 14, 24],
  [[[335,795],[315,760],[340,745],[360,770],[350,800]], -30, 8],
  [[[355,945],[375,925],[385,945],[372,957]], -20, 8]
];

districts.forEach(([poly, angle, size], n) => {
  const cx = poly.reduce((s, p) => s + p[0], 0) / poly.length;
  const cy = poly.reduce((s, p) => s + p[1], 0) / poly.length;
  const radius = Math.max(...poly.map(p => Math.hypot(p[0] - cx, p[1] - cy)));
  let lines = '', blocks = '';
  const split = (x, y, w, h) => {
    if (Math.max(w, h) < size * (0.7 + rnd() * 1.7)) {
      if (rnd() < 0.36) blocks += `M${x} ${y}h${w}v${h}h${-w}z`;
      return;
    }
    const f = 0.3 + rnd() * 0.4;
    const drop = rnd() < 0.16;
    const bend = (rnd() - 0.5) * 5;
    if (w > h) {
      if (!drop) lines += `M${x + w * f} ${y}q${bend} ${h / 2} ${bend / 2} ${h}`;
      split(x, y, w * f, h); split(x + w * f, y, w * (1 - f), h);
    } else {
      if (!drop) lines += `M${x} ${y + h * f}q${w / 2} ${bend} ${w} ${bend / 2}`;
      split(x, y, w, h * f); split(x, y + h * f, w, h * (1 - f));
    }
  };
  split(-radius, -radius, radius * 2, radius * 2);
  const industrial = size === 24;
  const clip = document.createElementNS(NS, 'clipPath');
  clip.id = 'district' + n;
  clip.innerHTML = `<polygon points="${poly.join(' ')}"/>`;
  const g = document.createElementNS(NS, 'g');
  g.setAttribute('clip-path', `url(#district${n})`);
  g.innerHTML = `<g transform="translate(${cx} ${cy}) rotate(${angle})" fill="none">` +
    (industrial ? '' : `<path d="${blocks}" fill="#e1e0df"/>`) +
    `<path d="${lines}" stroke="#d3d1d1" stroke-width="3.4"/>` +
    `<path d="${lines}" stroke="#fff" stroke-width="2.200"/></g>`;
  layer.append(clip, g);
});
```
